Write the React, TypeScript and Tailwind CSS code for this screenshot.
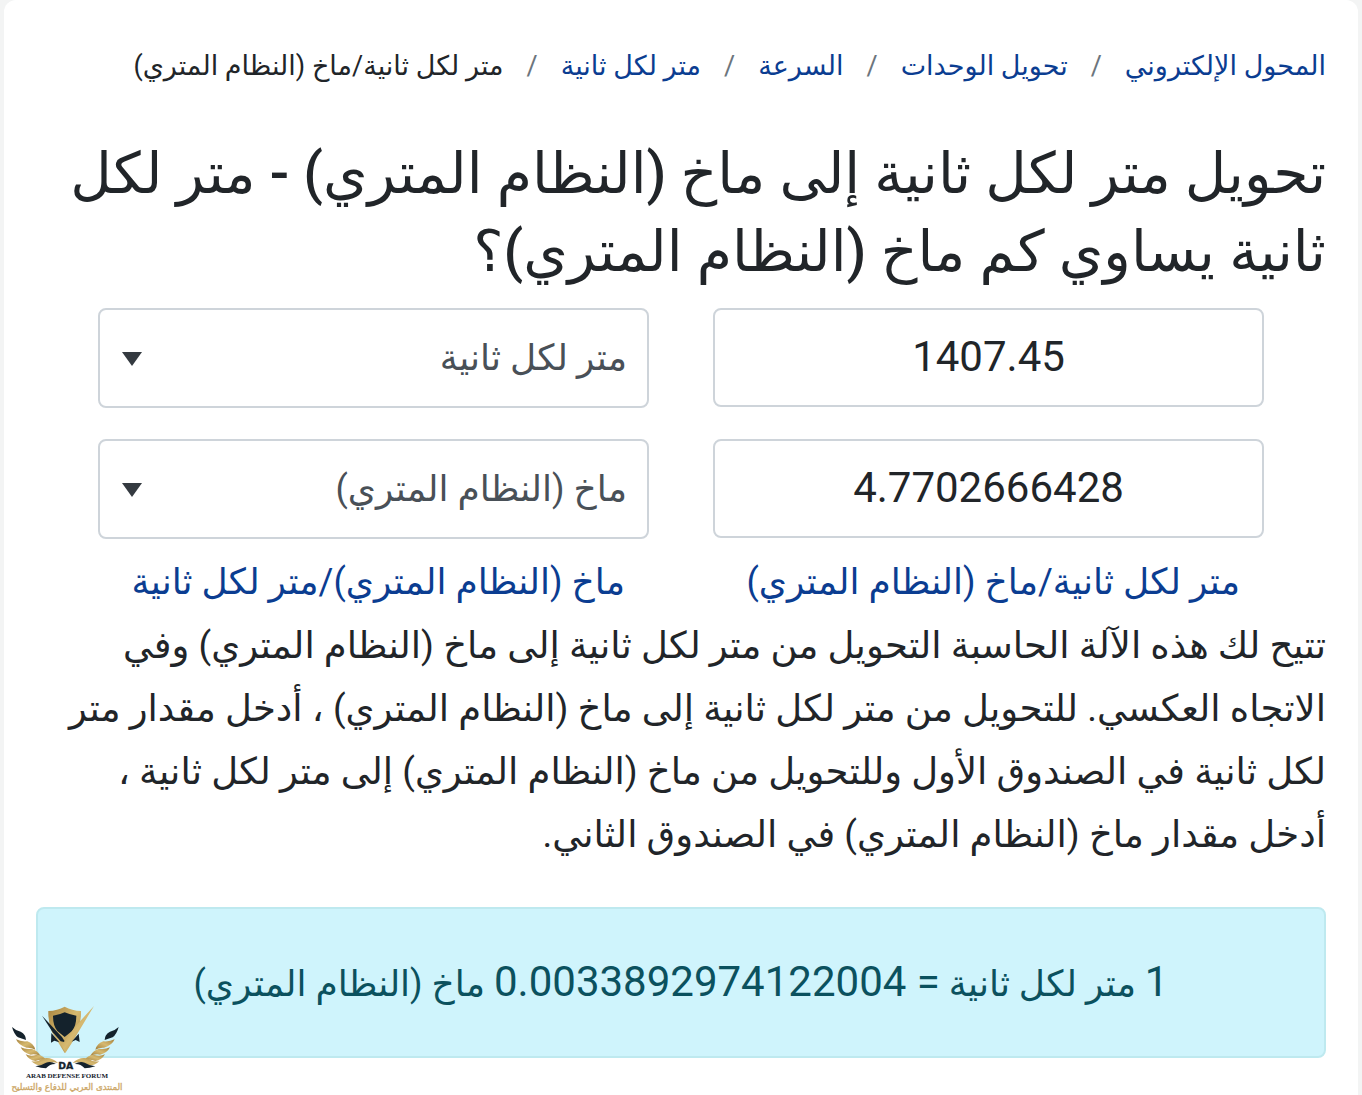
import { useState } from 'react';

const crumbs = [
  { href: '#home', label: 'المحول الإلكتروني' },
  { href: '#units', label: 'تحويل الوحدات' },
  { href: '#speed', label: 'السرعة' },
  { href: '#mps', label: 'متر لكل ثانية' },
];

const units = ['متر لكل ثانية', 'ماخ (النظام المتري)'];

interface UnitRowProps {
  id: string;
  label: string;
  value: string;
  unit: string;
  onValueChange: (value: string) => void;
  onUnitChange: (unit: string) => void;
}

function UnitRow({ id, label, value, unit, onValueChange, onUnitChange }: UnitRowProps) {
  return (
    <>
      <input
        id={id}
        aria-label={label}
        dir="ltr"
        value={value}
        onChange={(e) => onValueChange(e.target.value)}
        className="h-[99px] w-full min-w-0 rounded-lg border-2 border-[#ced4da] bg-white px-6 pb-0.5 text-center text-[42px] text-[#212529]"
      />
      <div className="relative">
        <select
          aria-label={`${label} - الوحدة`}
          value={unit}
          onChange={(e) => onUnitChange(e.target.value)}
          className="h-[100px] w-full appearance-none rounded-lg border-2 border-[#ced4da] bg-white pr-5 pl-16 text-[36px] text-[#495057]"
        >
          {units.map((name) => (
            <option key={name}>{name}</option>
          ))}
        </select>
        <svg viewBox="0 0 20 14" className="pointer-events-none absolute top-11 left-6 h-[14px] w-5" aria-hidden="true">
          <path d="M0 0H20L10 14Z" fill="#343a40" />
        </svg>
      </div>
    </>
  );
}

function ForumLogo() {
  return (
    <svg viewBox="0 0 420 300" className="absolute bottom-0 left-0 h-[100px] w-[140px]" role="img" aria-label="Arab Defense Forum">
      <defs>
        <linearGradient id="gold" x1="0" y1="0" x2="1" y2="1">
          <stop offset="0" stopColor="#a8843f" />
          <stop offset="0.5" stopColor="#d6b970" />
          <stop offset="1" stopColor="#a07c3a" />
        </linearGradient>
      </defs>

      {/* Shield */}
      <path d="M145 48Q172 47 194 35Q216 47 243 48Q244 84 232 112L194 174L156 112Q144 84 145 48Z" fill="url(#gold)" />
      <path d="M159 62Q178 60 194 52Q212 60 229 62Q229 92 216 108L194 126L172 108Q159 92 159 62Z" fill="#14222c" />
      <path d="M126 62L186 126L196 142L182 139L158 112Z" fill="#14222c" />
      <path d="M282 33L228 92L190 143L182 146L196 174L214 146Z" fill="url(#gold)" />
      <path d="M154 114L178 142L163 137L153 143Z" fill="#14222c" />
      <path d="M236 116L215 140L227 135L239 141Z" fill="#14222c" />

      {/* Wings */}
      {['', 'translate(392 0) scale(-1 1)'].map((transform) => (
        <g key={transform} transform={transform}>
          <path d="M36 96Q46 106 62 110Q78 118 78 135Q64 130 54 127Q42 118 36 96Z" fill="#14222c" />
          <path d="M48 133Q64 141 82 139Q100 144 106 164Q94 157 80 158Q56 152 48 133Z" fill="url(#gold)" />
          <path d="M62 157Q78 164 94 161Q112 165 122 183Q106 176 92 179Q70 174 62 157Z" fill="url(#gold)" />
          <path d="M77 178Q92 185 108 180Q128 179 138 194Q120 192 106 198Q86 195 77 178Z" fill="url(#gold)" />
          <path d="M94 199Q114 202 126 191Q152 183 174 204Q150 198 138 210Q112 216 94 199Z" fill="url(#gold)" />
          <path d="M106 214Q126 211 138 203Q152 197 168 207Q150 206 138 220Q124 220 106 214Z" fill="#14222c" />
        </g>
      ))}

      <text x="197" y="221" textAnchor="middle" fontSize="28" fontWeight="700" fill="#14222c" stroke="#14222c" className="font-['DejaVu_Sans',sans-serif]">
        DA
      </text>
      <text x="201" y="248" textAnchor="middle" fontSize="21" fontWeight="700" fill="#14222c" className="font-['Liberation_Serif',serif]">
        ARAB DEFENSE FORUM
      </text>
      <text x="201" y="284" textAnchor="middle" direction="rtl" fontSize="26" fill="#cda869" stroke="#cda869" className="font-['DejaVu_Sans',sans-serif]">
        المنتدى العربي للدفاع والتسليح
      </text>
    </svg>
  );
}

export default function App() {
  const [from, setFrom] = useState('1407.45');
  const [to, setTo] = useState('4.7702666428');
  const [fromUnit, setFromUnit] = useState(units[0]);
  const [toUnit, setToUnit] = useState(units[1]);

  return (
    <div dir="rtl" className="relative min-h-screen bg-[#f3f4f4] px-1 font-['Roboto','DejaVu_Sans',sans-serif] text-[#212529]">
      <main className="min-h-screen rounded-t-xl bg-white px-8 pt-12">
        <nav aria-label="breadcrumb">
          <ol className="flex flex-wrap text-[27px] leading-9">
            {crumbs.map((crumb) => (
              <li key={crumb.href} className="flex">
                <a href={crumb.href} className="text-[#0b3d91]">{crumb.label}</a>
                <span className="px-[23px] text-[#6c757d]">/</span>
              </li>
            ))}
            <li aria-current="page">متر لكل ثانية/ماخ (النظام المتري)</li>
          </ol>
        </nav>

        <h1 className="mt-[51px] text-[57px] leading-[78px] font-medium">
          تحويل متر لكل ثانية إلى ماخ (النظام المتري) - متر لكل
          <br />
          ثانية يساوي كم ماخ (النظام المتري)؟
        </h1>

        <form className="mx-[62px] mt-[17px] grid grid-cols-2 gap-x-16 gap-y-[31px]">
          <UnitRow id="from" label="القيمة الأولى" value={from} unit={fromUnit} onValueChange={setFrom} onUnitChange={setFromUnit} />
          <UnitRow id="to" label="القيمة الثانية" value={to} unit={toUnit} onValueChange={setTo} onUnitChange={setToUnit} />
        </form>

        <div className="mx-[62px] mt-3 grid grid-cols-2 gap-x-16 text-[36px] leading-[63px] whitespace-nowrap text-[#0b3d91]">
          <a href="#mps-mach" className="px-6">متر لكل ثانية/ماخ (النظام المتري)</a>
          <a href="#mach-mps" className="px-6">ماخ (النظام المتري)/متر لكل ثانية</a>
        </div>

        <p className="text-[37px] leading-[63px]">
          تتيح لك هذه الآلة الحاسبة التحويل من متر لكل ثانية إلى ماخ (النظام المتري) وفي
          <br />
          الاتجاه العكسي. للتحويل من متر لكل ثانية إلى ماخ (النظام المتري) ، أدخل مقدار متر
          <br />
          لكل ثانية في الصندوق الأول وللتحويل من ماخ (النظام المتري) إلى متر لكل ثانية ،
          <br />
          أدخل مقدار ماخ (النظام المتري) في الصندوق الثاني.
        </p>

        <div className="mt-[41px] flex h-[151px] items-center justify-center rounded-lg border-2 border-[#bee9ef] bg-[#cff4fc] pb-0.5 text-[#0b515e]">
          <p className="text-[36px]">
            <span className="text-[42px]">1</span> متر لكل ثانية{' '}
            <span className="text-[42px]">= 0.0033892974122004</span> ماخ (النظام المتري)
          </p>
        </div>
      </main>
      <ForumLogo />
    </div>
  );
}
